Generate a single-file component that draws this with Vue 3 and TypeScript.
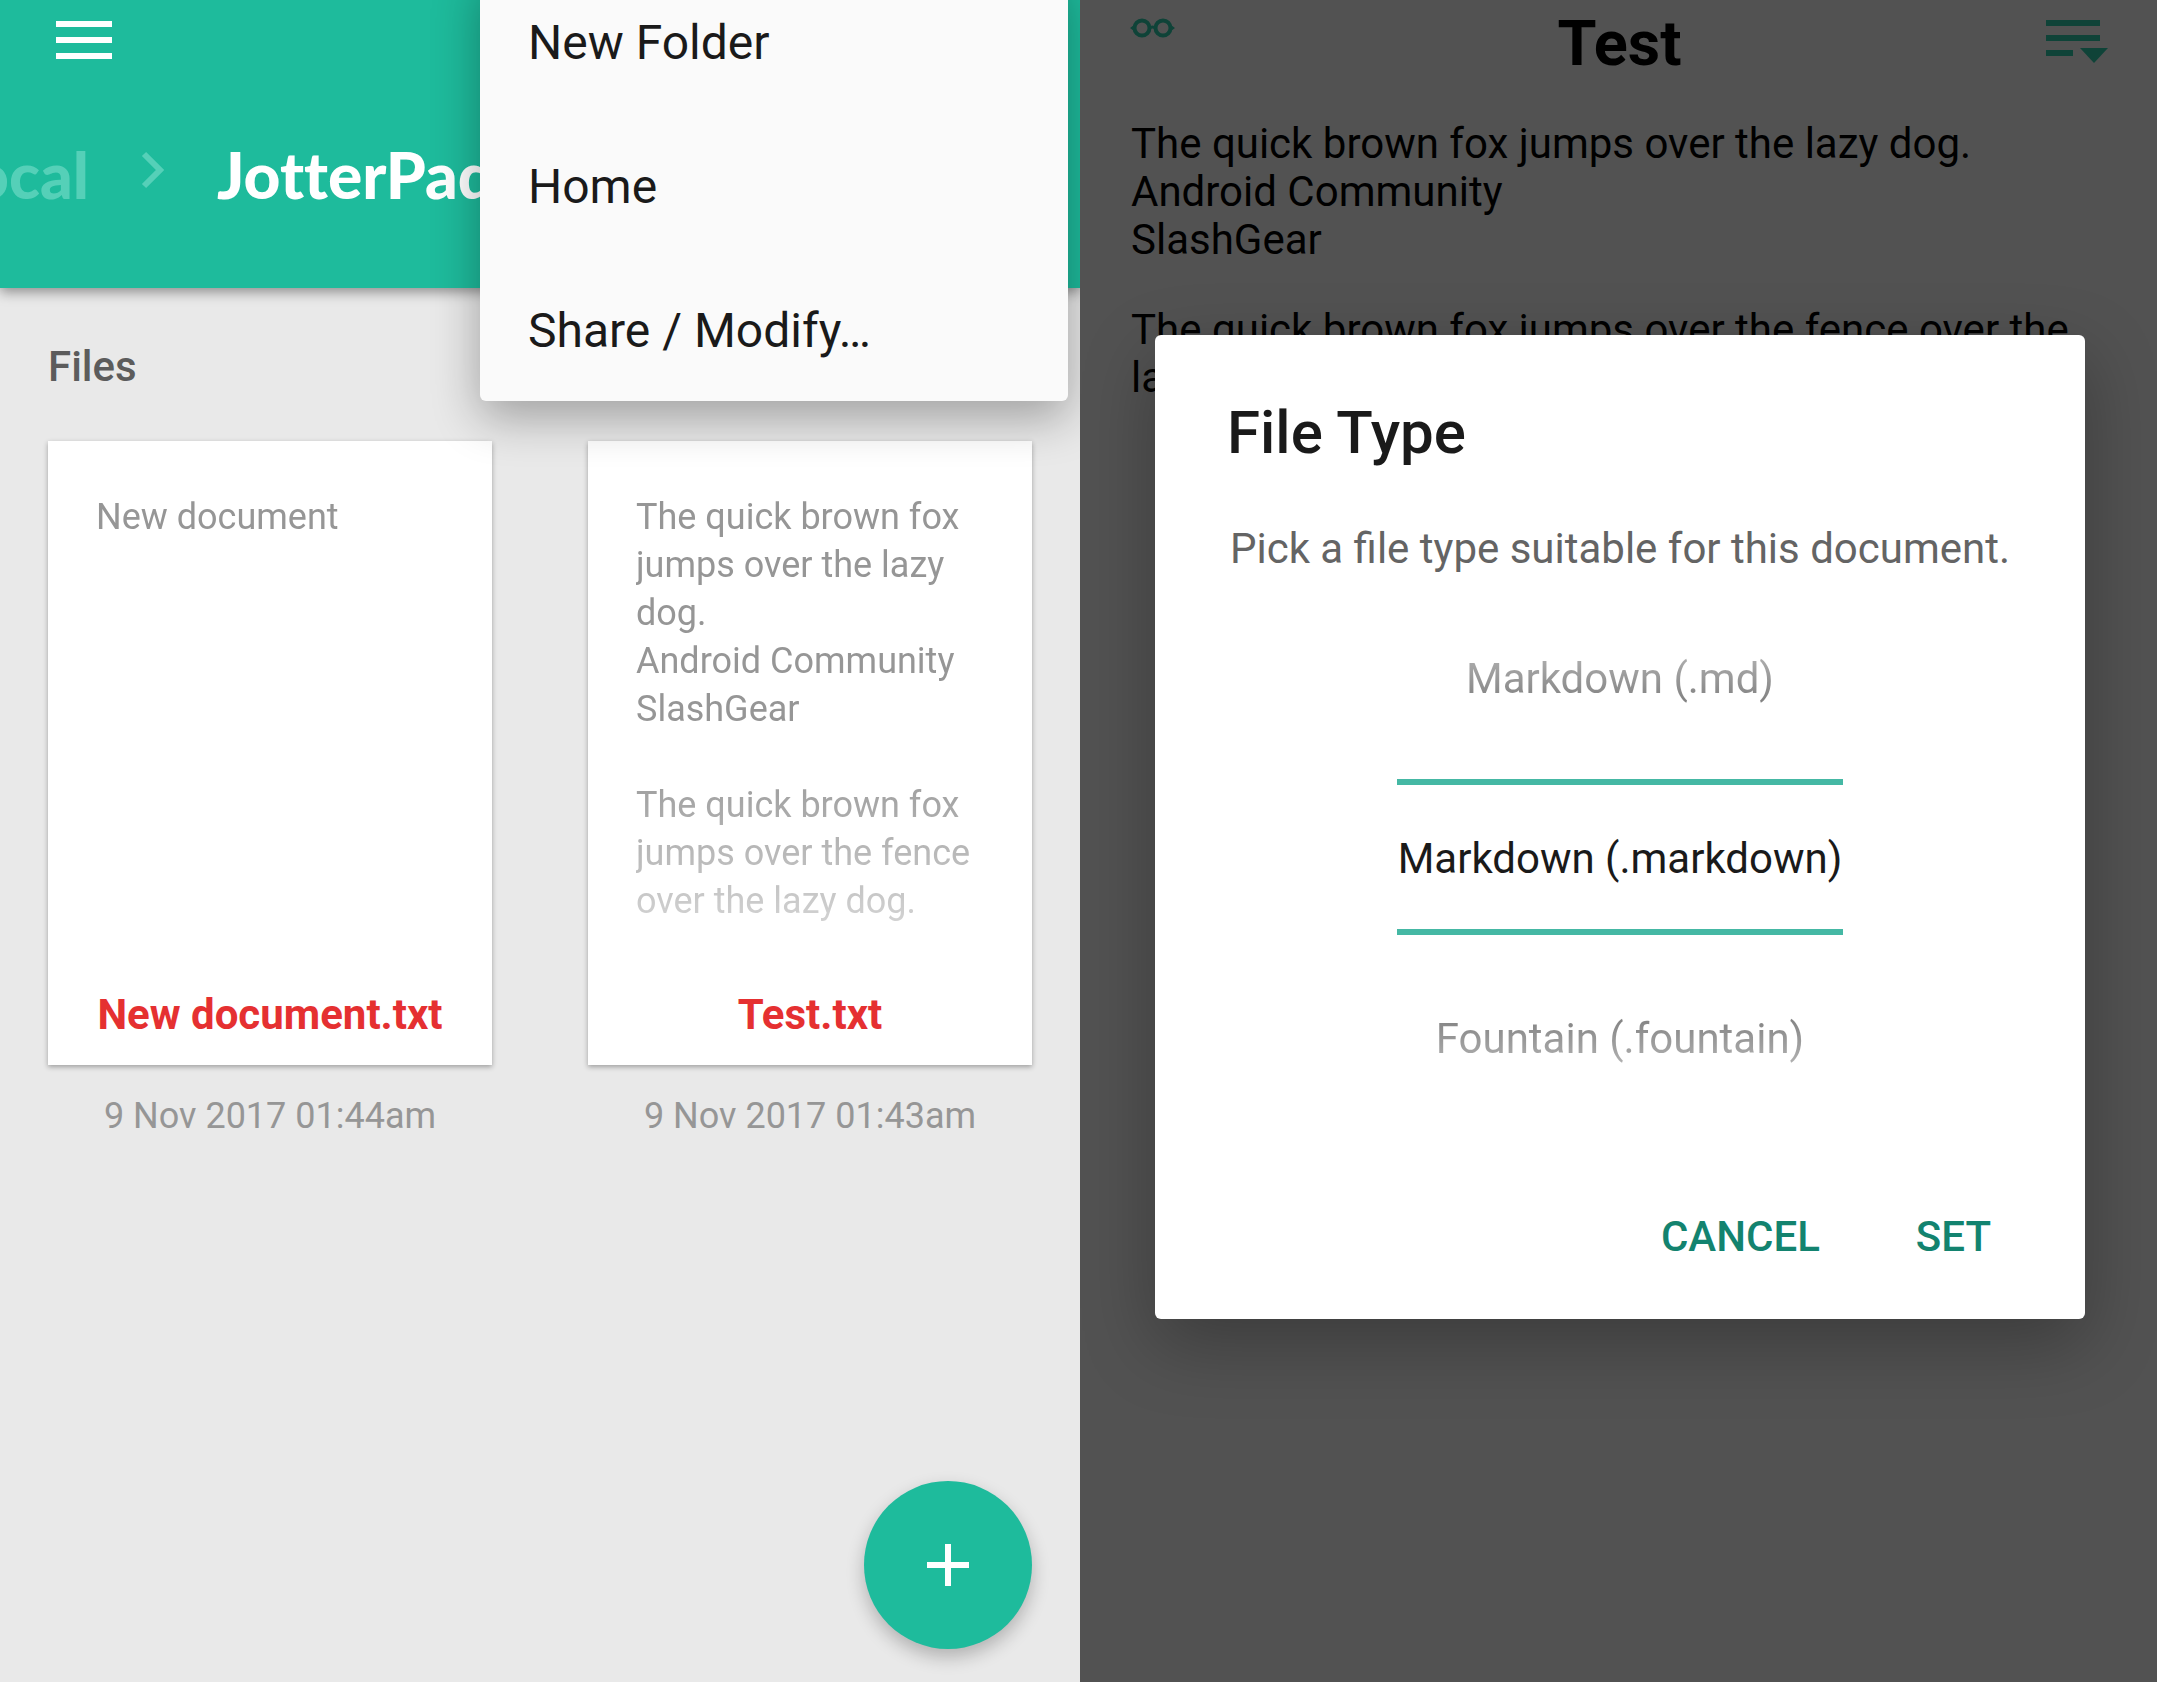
<script setup lang="ts">
import { ref } from 'vue'

interface NoteFile {
  name: string
  preview: string
  modified: string
}

interface FileType {
  value: string
  label: string
}

const menuItems: string[] = ['New Folder', 'Home', 'Share / Modify…']

const files: NoteFile[] = [
  { name: 'New document.txt', preview: 'New document', modified: '9 Nov 2017 01:44am' },
  {
    name: 'Test.txt',
    preview:
      'The quick brown fox jumps over the lazy dog.\nAndroid Community\nSlashGear\n\nThe quick brown fox jumps over the fence over the lazy dog.',
    modified: '9 Nov 2017 01:43am',
  },
]

const fileTypes: FileType[] = [
  { value: 'md', label: 'Markdown (.md)' },
  { value: 'markdown', label: 'Markdown (.markdown)' },
  { value: 'fountain', label: 'Fountain (.fountain)' },
]

const selectedType = ref<string>('markdown')
</script>

<template>
  <main class="screens">
    <section class="browser" aria-label="File browser">
      <header class="toolbar">
        <button class="icon-button" type="button" aria-label="Open navigation">
          <svg width="56" height="38" viewBox="0 0 56 38" fill="#fff">
            <rect width="56" height="6" />
            <rect y="16" width="56" height="6" />
            <rect y="32" width="56" height="6" />
          </svg>
        </button>
        <nav class="breadcrumb" aria-label="Folder path">
          <a class="crumb crumb-parent" href="#local">Local</a>
          <svg class="crumb-arrow" width="24" height="38" viewBox="0 0 24 38" fill="none" stroke="#55d0b8" stroke-width="6">
            <path d="M3 3 19 19 3 35" />
          </svg>
          <a class="crumb" href="#jotterpad">JotterPad</a>
        </nav>
      </header>

      <div class="menu" role="menu">
        <button v-for="item in menuItems" :key="item" class="menu-item" type="button" role="menuitem">{{ item }}</button>
      </div>

      <div class="files">
        <h2 class="files-heading">Files</h2>
        <div class="file-grid">
          <article v-for="file in files" :key="file.name" class="file">
            <div class="card">
              <p class="preview">{{ file.preview }}</p>
              <h3 class="file-name">{{ file.name }}</h3>
            </div>
            <p class="modified">{{ file.modified }}</p>
          </article>
        </div>
      </div>

      <button class="fab" type="button" aria-label="New file">
        <svg width="42" height="42" viewBox="0 0 42 42" fill="#fff">
          <rect x="18" width="6" height="42" />
          <rect y="18" width="42" height="6" />
        </svg>
      </button>
    </section>

    <section class="editor" aria-label="Editor">
      <header class="editor-bar">
        <button class="icon-button" type="button" aria-label="Reading mode">
          <svg class="glasses" width="44" height="16" viewBox="0 0 44 16" fill="none" stroke="#2cc3a4" stroke-width="4">
            <circle cx="11" cy="8" r="7.500" />
            <circle cx="32" cy="8" r="7.500" />
            <path d="M18 8.500q3.500-3 7 0" stroke-width="3" />
            <path d="M-1 8 3 5v6zM44 8 40 5v6z" fill="#2cc3a4" stroke="none" />
          </svg>
        </button>
        <h1 class="editor-title">Test</h1>
        <button class="icon-button" type="button" aria-label="More options">
          <svg width="62" height="44" viewBox="0 0 62 44" fill="#2cc3a4">
            <rect width="54" height="6" />
            <rect y="15" width="54" height="6" />
            <rect y="30" width="27" height="6" />
            <path d="M34 28h28L48 43z" />
          </svg>
        </button>
      </header>
      <div class="document">
        <p>The quick brown fox jumps over the lazy dog.<br />Android Community<br />SlashGear</p>
        <p>The quick brown fox jumps over the fence over the lazy dog.</p>
      </div>

      <div class="scrim">
        <form class="dialog" role="dialog" aria-labelledby="dialog-title" @submit.prevent>
          <h2 id="dialog-title" class="dialog-title">File Type</h2>
          <p class="dialog-text">Pick a file type suitable for this document.</p>
          <div class="picker" role="radiogroup" aria-labelledby="dialog-title">
            <label v-for="type in fileTypes" :key="type.value" class="option" :class="{ selected: type.value === selectedType }">
              <input v-model="selectedType" class="option-input" type="radio" name="file-type" :value="type.value" />
              <span class="option-label">{{ type.label }}</span>
            </label>
          </div>
          <div class="actions">
            <button class="action" type="button">CANCEL</button>
            <button class="action" type="submit">SET</button>
          </div>
        </form>
      </div>
    </section>
  </main>
</template>

<style>
body {
  margin: 0;
  background: #e9e9e9;
}
</style>

<style scoped>
.screens {
  display: grid;
  grid-template-columns: 1080fr 1077fr;
  min-height: 100vh;
  font-family: Roboto, "Liberation Sans", sans-serif;
  font-size: 42px;
  line-height: 48px;
}

h1,
h2,
h3,
p {
  margin: 0;
  font-size: inherit;
}

button {
  padding: 0;
  border: 0;
  background: none;
  color: inherit;
  font: inherit;
  cursor: pointer;
}

svg {
  display: block;
}

.browser {
  position: relative;
  display: flex;
  flex-direction: column;
  min-width: 0;
  overflow: hidden;
  background: #e9e9e9;
}

.toolbar {
  display: flex;
  flex-direction: column;
  align-items: flex-start;
  gap: 80px;
  box-sizing: border-box;
  height: 288px;
  padding-top: 21px;
  background: #1ebb9c;
  box-shadow: 0 4px 12px rgba(0, 0, 0, 0.4);
}

.toolbar .icon-button {
  margin-left: 56px;
}

.breadcrumb {
  display: flex;
  align-items: center;
  gap: 52px;
  margin-left: -60px;
  font-family: Lato, "Open Sans", sans-serif;
  font-size: 64px;
  font-variant-ligatures: none;
  font-weight: 900;
  line-height: 72px;
}

.crumb {
  color: #fff;
  text-decoration: none;
}

.crumb-parent {
  color: #55d0b8;
}

.crumb-arrow {
  margin-bottom: 10px;
}

.menu {
  position: absolute;
  z-index: 2;
  top: -31px;
  right: 12px;
  width: 588px;
  border-radius: 6px;
  background: #fafafa;
  box-shadow: 0 16px 48px rgba(0, 0, 0, 0.32);
}

.menu-item {
  display: block;
  width: 100%;
  height: 144px;
  padding: 4px 48px 0;
  color: #1a1a1a;
  font-size: 48px;
  text-align: left;
}

.files {
  padding: 55px 48px 0;
}

.files-heading {
  color: #5c5c5c;
  font-weight: 500;
}

.file-grid {
  display: grid;
  grid-template-columns: 1fr 1fr;
  gap: 96px;
  margin-top: 50px;
}

.card {
  display: flex;
  flex-direction: column;
  box-sizing: border-box;
  height: 624px;
  padding: 52px 48px 26px;
  background: #fff;
  box-shadow: 0 2px 5px rgba(0, 0, 0, 0.32);
}

.preview {
  height: 480px;
  color: #969696;
  font-size: 36px;
  white-space: pre-line;
  mask-image: linear-gradient(#000 55%, rgba(0, 0, 0, 0.25));
}

.file-name {
  margin: auto -12px 0;
  color: #e53031;
  font-weight: 700;
  text-align: center;
}

.modified {
  margin-top: 27px;
  color: #969696;
  font-size: 36px;
  text-align: center;
}

.fab {
  position: absolute;
  right: 48px;
  bottom: 33px;
  display: flex;
  align-items: center;
  justify-content: center;
  width: 168px;
  height: 168px;
  border-radius: 50%;
  background: #1ebb9c;
  box-shadow: 0 8px 18px rgba(0, 0, 0, 0.24);
}

.editor {
  position: relative;
  min-width: 0;
  overflow: hidden;
  background: #f0f0f0;
  color: #000;
}

.editor-bar {
  display: grid;
  grid-template-columns: 1fr auto 1fr;
  box-sizing: border-box;
  height: 88px;
  padding: 8px 49px 0 51px;
}

.editor-bar .icon-button {
  align-self: start;
  justify-self: start;
  margin-top: 12px;
}

.editor-bar .icon-button:last-child {
  justify-self: end;
}

.glasses {
  overflow: visible;
}

.editor-title {
  font-size: 63px;
  font-weight: 700;
  line-height: 72px;
}

.document {
  display: grid;
  gap: 42px;
  padding: 32px 51px 0;
}

.scrim {
  position: absolute;
  inset: 0;
  padding: 335px 72px 0 75px;
  background: rgba(0, 0, 0, 0.66);
}

.dialog {
  box-sizing: border-box;
  padding: 60px 72px 10px;
  border-radius: 6px;
  background: #fff;
  box-shadow: 0 24px 72px rgba(0, 0, 0, 0.28);
}

.dialog-title {
  color: #1a1a1a;
  font-size: 60px;
  font-weight: 500;
  line-height: 76px;
}

.dialog-text {
  margin-top: 54px;
  color: #646464;
  text-align: center;
  white-space: nowrap;
}

.picker {
  width: fit-content;
  margin: 2px auto 0;
}

.option {
  display: flex;
  align-items: center;
  justify-content: center;
  box-sizing: border-box;
  height: 204px;
  padding: 4px 1px 0;
}

.option-input {
  position: absolute;
  opacity: 0;
}

.option-label {
  background: linear-gradient(#b0b0b0, #808080);
  background-clip: text;
  color: transparent;
}

.option:last-child .option-label {
  background-image: linear-gradient(#808080, #b0b0b0);
}

.option.selected {
  height: 156px;
  border: solid #45b8a4;
  border-width: 6px 0;
}

.option.selected .option-label {
  background: none;
  color: #1a1a1a;
}

.actions {
  display: flex;
  justify-content: flex-end;
  gap: 52px;
  margin-top: 26px;
}

.action {
  height: 144px;
  padding: 0 22px;
  color: #13836f;
  font-weight: 500;
}
</style>
